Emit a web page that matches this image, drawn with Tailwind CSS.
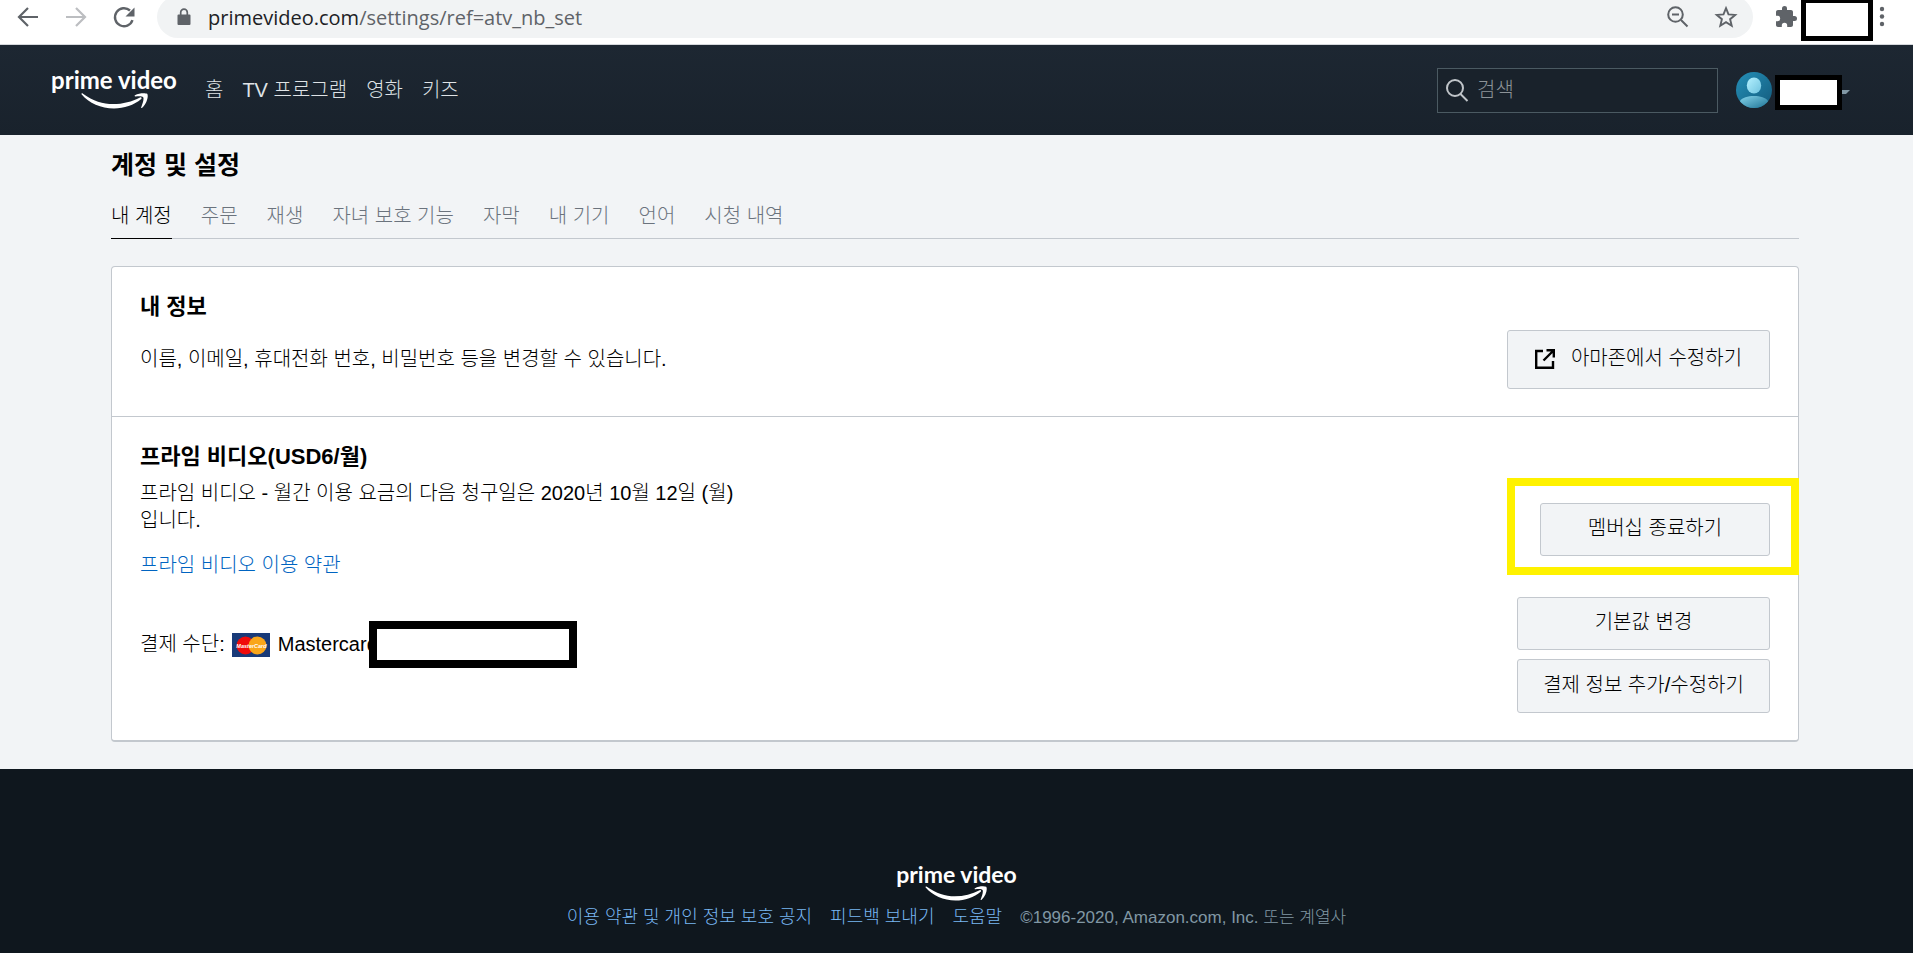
<!DOCTYPE html>
<html lang="ko">
<head>
  <meta charset="UTF-8" />
  <meta name="viewport" content="width=device-width, initial-scale=1.0" />
  <title>Prime Video: 계정 및 설정</title>
  <script src="https://cdn.jsdelivr.net/npm/@tailwindcss/browser@4"></script>
</head>
<body class="bg-[#f2f4f6] text-black text-[20px] leading-[27px] font-light font-['Liberation_Sans','Noto_Sans_CJK_KR',sans-serif] min-h-screen flex flex-col">

  <!-- Browser toolbar -->
  <div class="h-[45px] bg-white border-b border-[#d5d8dc] flex items-start overflow-hidden text-[#5f6368]">
    <div class="flex w-[157px] h-[34px] items-center pl-4 gap-6 shrink-0">
      <button type="button" aria-label="뒤로" class="w-6 h-6"><svg viewBox="0 0 24 24" class="w-6 h-6" fill="none" stroke="currentColor" stroke-width="2.2"><path d="M22 12H3.5M12 3l-9 9 9 9" /></svg></button>
      <button type="button" aria-label="앞으로" class="w-6 h-6 text-[#bcbec1]"><svg viewBox="0 0 24 24" class="w-6 h-6" fill="none" stroke="currentColor" stroke-width="2.2"><path d="M2 12h18.500M12 3l9 9-9 9" /></svg></button>
      <button type="button" aria-label="새로고침" class="w-6 h-6"><svg viewBox="0 0 24 24" class="w-6 h-6"><path d="M20.500 15.200A9 9 0 1 1 18 5.500" fill="none" stroke="currentColor" stroke-width="2.4" /><path d="M22.500 2.500v9h-9z" fill="currentColor" /></svg></button>
    </div>
    <div class="flex-1 h-[42px] -mt-1 rounded-full bg-[#f1f3f4] flex items-center pl-5 pr-[15px]">
      <svg viewBox="0 0 14 18" class="w-3.5 h-[18px] mr-[17px] shrink-0"><path d="M1.500 6.500h11a1 1 0 0 1 1 1v8.500a1 1 0 0 1-1 1h-11a1 1 0 0 1-1-1v-8.500a1 1 0 0 1 1-1z" fill="currentColor" /><path d="M3.700 7V4.500a3.300 3.300 0 0 1 6.600 0V7" fill="none" stroke="currentColor" stroke-width="1.700" /></svg>
      <p class="flex-1 font-normal font-['Open_Sans',sans-serif] text-[20px] whitespace-nowrap"><span class="text-[#202124]">primevideo.com</span>/settings/ref=atv_nb_set</p>
      <button type="button" aria-label="축소" class="w-6 h-6 mr-6"><svg viewBox="0 0 24 24" class="w-6 h-6" fill="none" stroke="currentColor" stroke-width="2"><circle cx="9.500" cy="9.500" r="7.300" /><path d="M15 15l6.500 6.500M6 9.500h7" /></svg></button>
      <button type="button" aria-label="북마크" class="w-6 h-6"><svg viewBox="0 0 24 24" class="w-6 h-6"><path d="M12 3.200l2.500 6.200 6.700.5-5.100 4.300 1.600 6.500-5.700-3.500-5.700 3.500 1.600-6.500-5.100-4.300 6.700-.5z" fill="none" stroke="currentColor" stroke-width="1.900" /></svg></button>
    </div>
    <div class="w-[160px] h-[34px] shrink-0 flex items-center pl-[21px]">
      <button type="button" aria-label="확장 프로그램" class="w-6 h-6"><svg viewBox="0 0 24 24" class="w-6 h-6" fill="currentColor"><path d="M20.500 11H19V7c0-1.100-.9-2-2-2h-4V3.500a2.500 2.500 0 0 0-5 0V5H4c-1.100 0-2 .9-2 2v3.800h1.500a2.700 2.700 0 0 1 0 5.400H2V20c0 1.100.9 2 2 2h3.800v-1.500a2.700 2.700 0 0 1 5.400 0V22H17c1.100 0 2-.9 2-2v-4h1.500a2.500 2.500 0 0 0 0-5z" /></svg></button>
      <span class="self-start w-[72px] h-[41px] ml-[3px] shrink-0 border-[5px] border-t-[3px] border-black bg-white"></span>
      <button type="button" aria-label="메뉴" class="w-2 h-6 ml-[5px] shrink-0"><svg viewBox="0 0 8 24" class="w-2 h-6" fill="currentColor"><circle cx="4" cy="4" r="2.200" /><circle cx="4" cy="11.500" r="2.200" /><circle cx="4" cy="19" r="2.200" /></svg></button>
    </div>
  </div>

  <!-- Site header -->
  <header class="h-[90px] bg-linear-to-b from-[#1d2732] to-[#19222c] flex items-center pl-[50px] pr-[63px] text-[#dfe3e6]">
    <a href="#" class="w-[128px] pb-1 flex flex-col items-center text-white font-['Lato',sans-serif] font-bold text-[24px] leading-[26px] whitespace-nowrap">
      prime video
      <svg viewBox="0 0 67 16" class="w-[67px] h-4" fill="currentColor"><path d="M.5 1.200C.3.400 1.200 0 2 .7 12 8 22 11 32 11c10 0 19-2.500 27-6.600 1.200-.6 2.200.6 1.200 1.600C53 12 43 15.500 33 15.500 20 15.500 8 10 .5 1.200z" /><path d="M54 2.200C58 0 64-.3 66.200.8c1.600 2.200-.4 10-5 14-.7.500-1.300.2-1-.5 1.400-3.500 3-8.300 2-10-1.200-1.500-5.200-1-7.700-.9-1 0-1.200-.8-.5-1.200z" /></svg>
    </a>
    <nav class="flex gap-[19px] ml-[27px]">
      <a href="#">홈</a>
      <a href="#">TV 프로그램</a>
      <a href="#">영화</a>
      <a href="#">키즈</a>
    </nav>
    <label class="ml-auto w-[281px] h-[45px] border border-[#4b5a62] bg-[#19222b] flex items-center pl-[7px]">
      <svg viewBox="0 0 24 24" class="w-6 h-6 shrink-0" fill="none" stroke="#c0c5c9" stroke-width="2"><circle cx="10" cy="10" r="8" /><path d="M15.500 16l7 7" /></svg>
      <input type="search" aria-label="검색" placeholder="검색" class="w-full bg-transparent pl-2 outline-none placeholder:text-[#8c9398]" />
    </label>
    <button type="button" aria-label="프로필" class="ml-[18px] flex items-center">
      <svg viewBox="0 0 36 36" class="w-9 h-9">
        <defs>
          <linearGradient id="disc" x1="0" y1="0" x2="1" y2="1"><stop offset="0" stop-color="#2590b8" /><stop offset="1" stop-color="#135a7c" /></linearGradient>
          <linearGradient id="head" x1="0" y1="0" x2="1" y2="1"><stop offset="0" stop-color="#b5f1ff" /><stop offset="1" stop-color="#6fc3df" /></linearGradient>
          <linearGradient id="torso" x1="0" y1="0" x2="1" y2="1"><stop offset="0" stop-color="#85d3ea" /><stop offset="1" stop-color="#1f7496" /></linearGradient>
          <clipPath id="round"><circle cx="18" cy="18" r="18" /></clipPath>
        </defs>
        <circle cx="18" cy="18" r="18" fill="url(#disc)" />
        <ellipse cx="18" cy="13.500" rx="7.200" ry="8" fill="url(#head)" />
        <path d="M4 29c2-3.500 8-5 14-5s12 1.500 14 5v7H4z" fill="url(#torso)" clip-path="url(#round)" />
      </svg>
      <span class="ml-[3px] w-[67px] h-[35px] mt-1 border-[5px] border-black bg-white"></span>
      <svg viewBox="0 0 8 4" class="w-2 h-1 mt-1" fill="#8197a4"><path d="M0 0h8L4 4H0z" /></svg>
    </button>
  </header>

  <main class="pl-[111px] pr-[114px] pb-[27px]">
    <h1 class="pt-[14px] text-[25px] leading-8 font-bold">계정 및 설정</h1>
    <nav class="mt-[22px] flex gap-[29px] border-b border-[#c3c8ce] text-[#6b737d]">
      <a href="#" class="h-9 -mb-px border-b border-black text-black">내 계정</a>
      <a href="#">주문</a>
      <a href="#">재생</a>
      <a href="#">자녀 보호 기능</a>
      <a href="#">자막</a>
      <a href="#">내 기기</a>
      <a href="#">언어</a>
      <a href="#">시청 내역</a>
    </nav>

    <div class="mt-[27px] bg-white border border-b-2 border-[#c3c8ce] rounded">
      <section class="h-[150px] px-7 flex justify-between border-b border-[#c3c8ce]">
        <div class="pt-[26px]">
          <h2 class="text-[22px] font-bold">내 정보</h2>
          <p class="mt-[26px]">이름, 이메일, 휴대전화 번호, 비밀번호 등을 변경할 수 있습니다.</p>
        </div>
        <button type="button" class="mt-[63px] h-[59px] w-[263px] pb-0.5 bg-[#f2f4f6] border border-[#c3c8ce] rounded-[3px] flex items-center justify-center gap-4">
          <svg viewBox="0 0 20 20" class="w-5 h-5" fill="none" stroke="#000" stroke-width="2.400"><path d="M8 2H1.200v16.800H18V12" /><path d="M11.500 1.200h7.300v7.300M18.500 1.500L8.500 11.500" /></svg>
          아마존에서 수정하기
        </button>
      </section>

      <section class="px-7 pb-[27px] flex justify-between">
        <div class="pt-[26px]">
          <h2 class="text-[22px] font-bold">프라임 비디오(USD6/월)</h2>
          <p class="mt-2.5">프라임 비디오 - 월간 이용 요금의 다음 청구일은 2020년 10월 12일 (월)<br />입니다.</p>
          <a href="#" class="mt-[18px] block text-[#0064c1]">프라임 비디오 이용 약관</a>
          <div class="relative mt-[52px] w-[437px] flex items-center">
            결제 수단:
            <svg viewBox="0 0 38 24" class="w-[38px] h-6 ml-[7px] mr-2">
              <rect width="38" height="24" fill="#193a78" />
              <circle cx="13.500" cy="12.500" r="9" fill="#f00a0a" />
              <circle cx="25.500" cy="12.500" r="9" fill="#f9a61a" />
              <text x="19.500" y="14.500" text-anchor="middle" font-size="5.500" font-weight="700" font-style="italic" fill="#fff">MasterCard</text>
            </svg>
            Mastercard
            <span class="absolute right-0 -top-2.5 w-[208px] h-[47px] border-8 border-black bg-white"></span>
          </div>
        </div>
        <div class="pt-[61px] flex flex-col items-end">
          <div class="-mr-[29px] w-[292px] h-[97px] border-8 border-[#fff200] flex items-center justify-end pr-[21px]">
            <button type="button" class="mt-[5px] w-[230px] h-[53px] pb-0.5 bg-[#f2f4f6] border border-[#c3c8ce] rounded-[3px]">멤버십 종료하기</button>
          </div>
          <button type="button" class="mt-[22px] w-[253px] h-[53px] pb-0.5 bg-[#f2f4f6] border border-[#c3c8ce] rounded-[3px]">기본값 변경</button>
          <button type="button" class="mt-[9px] w-[253px] h-[54px] pb-0.5 bg-[#f2f4f6] border border-[#c3c8ce] rounded-[3px]">결제 정보 추가/수정하기</button>
        </div>
      </section>
    </div>
  </main>

  <footer class="grow bg-[#0f171e] pt-[93px] flex flex-col items-center">
    <a href="#" class="flex flex-col items-center text-white font-['Lato',sans-serif] font-bold text-[23px] leading-6 whitespace-nowrap">
      prime video
      <svg viewBox="0 0 67 16" class="w-[62px] h-[15px]" fill="currentColor"><path d="M.5 1.200C.3.400 1.200 0 2 .7 12 8 22 11 32 11c10 0 19-2.500 27-6.600 1.200-.6 2.200.6 1.200 1.600C53 12 43 15.500 33 15.500 20 15.500 8 10 .5 1.200z" /><path d="M54 2.200C58 0 64-.3 66.200.8c1.600 2.200-.4 10-5 14-.7.500-1.300.2-1-.5 1.400-3.500 3-8.300 2-10-1.200-1.500-5.200-1-7.700-.9-1 0-1.200-.8-.5-1.200z" /></svg>
    </a>
    <div class="mt-1 flex items-baseline gap-[18px] text-[18px] leading-6 text-[#79b8f3]">
      <a href="#">이용 약관 및 개인 정보 보호 공지</a>
      <a href="#">피드백 보내기</a>
      <a href="#">도움말</a>
      <span class="text-[17px] text-[#8197a4]">©1996-2020, Amazon.com, Inc. 또는 계열사</span>
    </div>
  </footer>
</body>
</html>
